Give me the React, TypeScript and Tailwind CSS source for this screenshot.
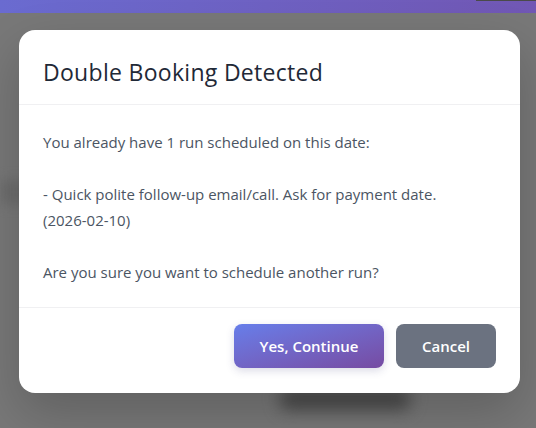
import React from "react";

export default function App() {
  return (
    <div className="relative w-[536px] h-[428px] overflow-hidden bg-[#787878]" style={{ fontFamily: '"Open Sans", "Noto Sans", sans-serif' }}>
      {/* header bar of underlying page */}
      <div className="h-[13px] w-full bg-gradient-to-r from-[#6a6bd0] to-[#7157b4]" />
      <div className="absolute right-0 top-0 h-[1px] w-[60px] bg-[#4a4a4a]" />
      {/* blurred underlying content */}
      <div className="absolute left-0 top-[180px] h-[24px] w-[30px] bg-[#6c6c6c] blur-[6px]" />
      <div className="absolute left-[280px] top-[388px] h-[22px] w-[130px] rounded-lg bg-[#4a4a4a] blur-[8px]" />

      <div className="absolute left-[19px] top-[30px] w-[501px] rounded-2xl bg-white shadow-[0_20px_50px_rgba(0,0,0,0.2)]">
        <div className="border-b border-[#f0f0f2] px-6 pt-[28px] pb-[18px]">
          <h2 className="text-[23px] leading-[28px] tracking-[0.3px] font-normal text-[#1f2937]">Double Booking Detected</h2>
        </div>
        <div className="border-b border-[#f0f0f2] px-6 pt-6 pb-[22px] text-[15px] leading-[26px] text-[#4b5563]">
          <p>You already have 1 run scheduled on this date:</p>
          <p>&nbsp;</p>
          <p>- Quick polite follow-up email/call. Ask for payment date.</p>
          <p>(2026-02-10)</p>
          <p>&nbsp;</p>
          <p>Are you sure you want to schedule another run?</p>
        </div>
        <div className="flex justify-end gap-3 px-6 pt-[16px] pb-[25px]">
          <button className="h-[44px] w-[150px] rounded-lg bg-gradient-to-br from-[#667eea] to-[#764ba2] text-[15px] font-semibold text-white shadow-[0_3px_8px_rgba(60,60,120,0.18)]">
            Yes, Continue
          </button>
          <button className="h-[44px] w-[100px] rounded-lg bg-[#6b7280] text-[15px] font-semibold text-white">
            Cancel
          </button>
        </div>
      </div>
    </div>
  );
}
